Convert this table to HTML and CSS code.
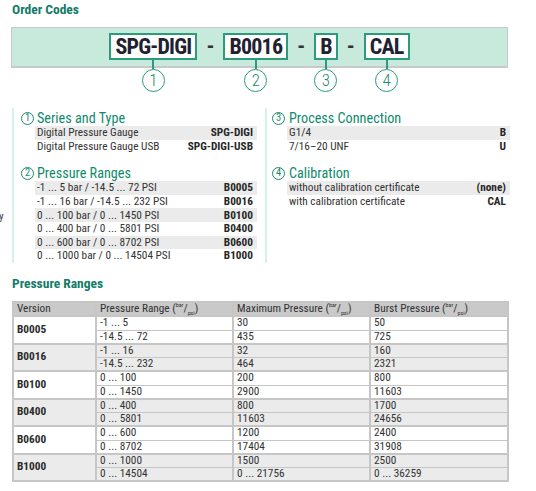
FILE: index.html
```html
<!DOCTYPE html>
<html>
<head>
<meta charset="utf-8">
<link rel="stylesheet" href="styles.css">
</head>
<body>
<main class="page">
  <h2 class="heading">Order Codes</h2>
  <div class="band">
    <div class="code"><span class="code-box">SPG-DIGI</span><span class="stem"></span><span class="num">1</span></div>
    <span class="dash">-</span>
    <div class="code"><span class="code-box">B0016</span><span class="stem"></span><span class="num">2</span></div>
    <span class="dash">-</span>
    <div class="code"><span class="code-box">B</span><span class="stem"></span><span class="num">3</span></div>
    <span class="dash">-</span>
    <div class="code"><span class="code-box">CAL</span><span class="stem"></span><span class="num">4</span></div>
  </div>

  <div class="sections">
    <div class="edge"><span class="edge-text">y</span></div>
    <div class="col col-left">
      <h3 class="sec-title"><span class="mini">1</span>Series and Type</h3>
      <div class="row alt"><span>Digital Pressure Gauge</span><b>SPG-DIGI</b></div>
      <div class="row"><span>Digital Pressure Gauge USB</span><b>SPG-DIGI-USB</b></div>
      <h3 class="sec-title sec-gap"><span class="mini">2</span>Pressure Ranges</h3>
      <div class="row alt"><span>-1 ... 5 bar / -14.5 ... 72 PSI</span><b>B0005</b></div>
      <div class="row"><span>-1 ... 16 bar / -14.5 ... 232 PSI</span><b>B0016</b></div>
      <div class="row alt"><span>0 ... 100 bar / 0 ... 1450 PSI</span><b>B0100</b></div>
      <div class="row"><span>0 ... 400 bar / 0 ... 5801 PSI</span><b>B0400</b></div>
      <div class="row alt"><span>0 ... 600 bar / 0 ... 8702 PSI</span><b>B0600</b></div>
      <div class="row"><span>0 ... 1000 bar / 0 ... 14504 PSI</span><b>B1000</b></div>
    </div>
    <div class="col col-right">
      <h3 class="sec-title"><span class="mini">3</span>Process Connection</h3>
      <div class="row alt"><span>G1/4</span><b>B</b></div>
      <div class="row"><span>7/16–20 UNF</span><b>U</b></div>
      <h3 class="sec-title sec-gap"><span class="mini">4</span>Calibration</h3>
      <div class="row alt"><span>without calibration certificate</span><b>(none)</b></div>
      <div class="row"><span>with calibration certificate</span><b>CAL</b></div>
    </div>
  </div>

  <h2 class="heading heading-table">Pressure Ranges</h2>
  <table class="ranges">
    <colgroup>
      <col class="c1"><col class="c2"><col class="c3"><col class="c4">
    </colgroup>
    <thead>
      <tr>
        <th>Version</th>
        <th>Pressure Range (<sup>bar</sup>/<sub>psi</sub>)</th>
        <th>Maximum Pressure (<sup>bar</sup>/<sub>psi</sub>)</th>
        <th>Burst Pressure (<sup>bar</sup>/<sub>psi</sub>)</th>
      </tr>
    </thead>
    <tbody class="grp">
      <tr><td rowspan="2" class="ver">B0005</td><td>-1 ... 5</td><td>30</td><td>50</td></tr>
      <tr class="sub"><td>-14.5 ... 72</td><td>435</td><td>725</td></tr>
    </tbody>
    <tbody class="grp shade">
      <tr><td rowspan="2" class="ver">B0016</td><td>-1 ... 16</td><td>32</td><td>160</td></tr>
      <tr class="sub"><td>-14.5 ... 232</td><td>464</td><td>2321</td></tr>
    </tbody>
    <tbody class="grp">
      <tr><td rowspan="2" class="ver">B0100</td><td>0 ... 100</td><td>200</td><td>800</td></tr>
      <tr class="sub"><td>0 ... 1450</td><td>2900</td><td>11603</td></tr>
    </tbody>
    <tbody class="grp shade">
      <tr><td rowspan="2" class="ver">B0400</td><td>0 ... 400</td><td>800</td><td>1700</td></tr>
      <tr class="sub"><td>0 ... 5801</td><td>11603</td><td>24656</td></tr>
    </tbody>
    <tbody class="grp">
      <tr><td rowspan="2" class="ver">B0600</td><td>0 ... 600</td><td>1200</td><td>2400</td></tr>
      <tr class="sub"><td>0 ... 8702</td><td>17404</td><td>31908</td></tr>
    </tbody>
    <tbody class="grp shade">
      <tr><td rowspan="2" class="ver">B1000</td><td>0 ... 1000</td><td>1500</td><td>2500</td></tr>
      <tr class="sub"><td>0 ... 14504</td><td>0 ... 21756</td><td>0 ... 36259</td></tr>
    </tbody>
  </table>
</main>
</body>
</html>
```

FILE: styles.css
```css
* { box-sizing: border-box; }

body {
  margin: 0;
  background: #ffffff;
  font-family: "Roboto Condensed", "Liberation Sans Narrow", "DejaVu Sans Condensed", sans-serif;
  color: #333333;
}

.page {
  width: 536px;
}

.heading {
  margin: 0 0 0 12px;
  padding-top: 2px;
  font-size: 13.5px;
  line-height: 15px;
  font-weight: 700;
  color: #137b68;
}

/* ---------- order code band ---------- */
.band {
  margin: 10px 0 0 11px;
  width: 497px;
  height: 41px;
  background: #c7eadd;
  border: 1px solid #c9c9c9;
  border-bottom-width: 2px;
  display: flex;
  justify-content: center;
  align-items: flex-start;
  padding-top: 5px;
}

.code {
  display: flex;
  flex-direction: column;
  align-items: center;
}

.code-box {
  display: block;
  height: 27px;
  min-width: 23px;
  padding: 0 4px;
  background: #ffffff;
  border: 2px solid #2b9b7c;
  font-size: 22px;
  line-height: 23px;
  font-weight: 700;
  letter-spacing: -0.8px;
  text-align: center;
  color: #1e2230;
}

.stem {
  display: block;
  width: 2px;
  height: 9px;
  background: #2b9b7c;
}

.num {
  display: flex;
  align-items: center;
  justify-content: center;
  width: 23px;
  height: 23px;
  border: 1.5px solid #2b9b7c;
  border-radius: 50%;
  background: #ffffff;
  color: #1d8a6e;
  font-weight: 300;
  font-size: 17px;
  line-height: 1;
}

.dash {
  margin: 0 9px;
  font-size: 22px;
  line-height: 27px;
  font-weight: 700;
  color: #333333;
}

/* ---------- sections ---------- */
.sections {
  display: grid;
  grid-template-columns: 12px 253px 245px;
  margin-top: 40px;
}

.edge {
  overflow: hidden;
  padding-top: 103px;
  font-size: 11px;
  line-height: 12px;
  color: #333;
}

.edge-text {
  display: block;
  margin-left: -1px;
}

.col {
  border-left: 2px solid #d6f1e7;
  padding-top: 2px;
  height: 155px;
}

.col-left { padding-left: 7px; padding-right: 8px; }
.col-right { padding-left: 5px; }

.sec-title {
  display: flex;
  align-items: center;
  margin: 0;
  height: 16px;
  font-size: 14.2px;
  line-height: 16px;
  font-weight: 400;
  color: #0f8a6d;
  white-space: nowrap;
}

.sec-gap { margin-top: 12px; }

.mini {
  display: flex;
  align-items: center;
  justify-content: center;
  flex: none;
  width: 13px;
  height: 13px;
  margin-right: 3px;
  border: 1px solid #1d8a6e;
  border-radius: 50%;
  font-size: 10.5px;
  line-height: 1;
  color: #1d8a6e;
}

.col-right .mini { margin-right: 4px; }

.row {
  display: flex;
  justify-content: space-between;
  align-items: center;
  height: 13.6px;
  margin-left: 14px;
  padding: 0 4px 0 2px;
  font-size: 11.3px;
  line-height: 13px;
  color: #333333;
  white-space: nowrap;
}

.col-right .row { margin-left: 15px; }

.row b { font-weight: 700; color: #262626; }

.alt { background: #ebebeb; }

/* ---------- table ---------- */
.heading-table {
  margin-top: 11px;
}

.ranges {
  margin: 10px 0 0 12px;
  width: 495px;
  border-collapse: collapse;
  table-layout: fixed;
  border: 2px solid #c6c6c6;
  font-size: 11.3px;
  color: #333333;
}

.c1 { width: 83px; }
.c2 { width: 137px; }
.c3 { width: 137px; }
.c4 { width: 138px; }

.ranges th,
.ranges td {
  padding: 0 0 0 3px;
  height: 14px;
  line-height: 12px;
  text-align: left;
  font-weight: 400;
  white-space: nowrap;
  border-left: 2px solid #c6c6c6;
  border-right: 2px solid #c6c6c6;
  vertical-align: middle;
}

.ranges .sub td { height: 13px; }

.ranges th {
  background: #c9c9c9;
  color: #333333;
  height: 13.5px;
}

.ranges sup,
.ranges sub {
  font-size: 6px;
  line-height: 0;
}

.grp { border-top: 2px solid #c6c6c6; }

.sub td { border-top: 1px solid #c6c6c6; }

.shade td { background: #ebebeb; }

.ranges .ver { font-weight: 700; color: #2a2a2a; }
```
